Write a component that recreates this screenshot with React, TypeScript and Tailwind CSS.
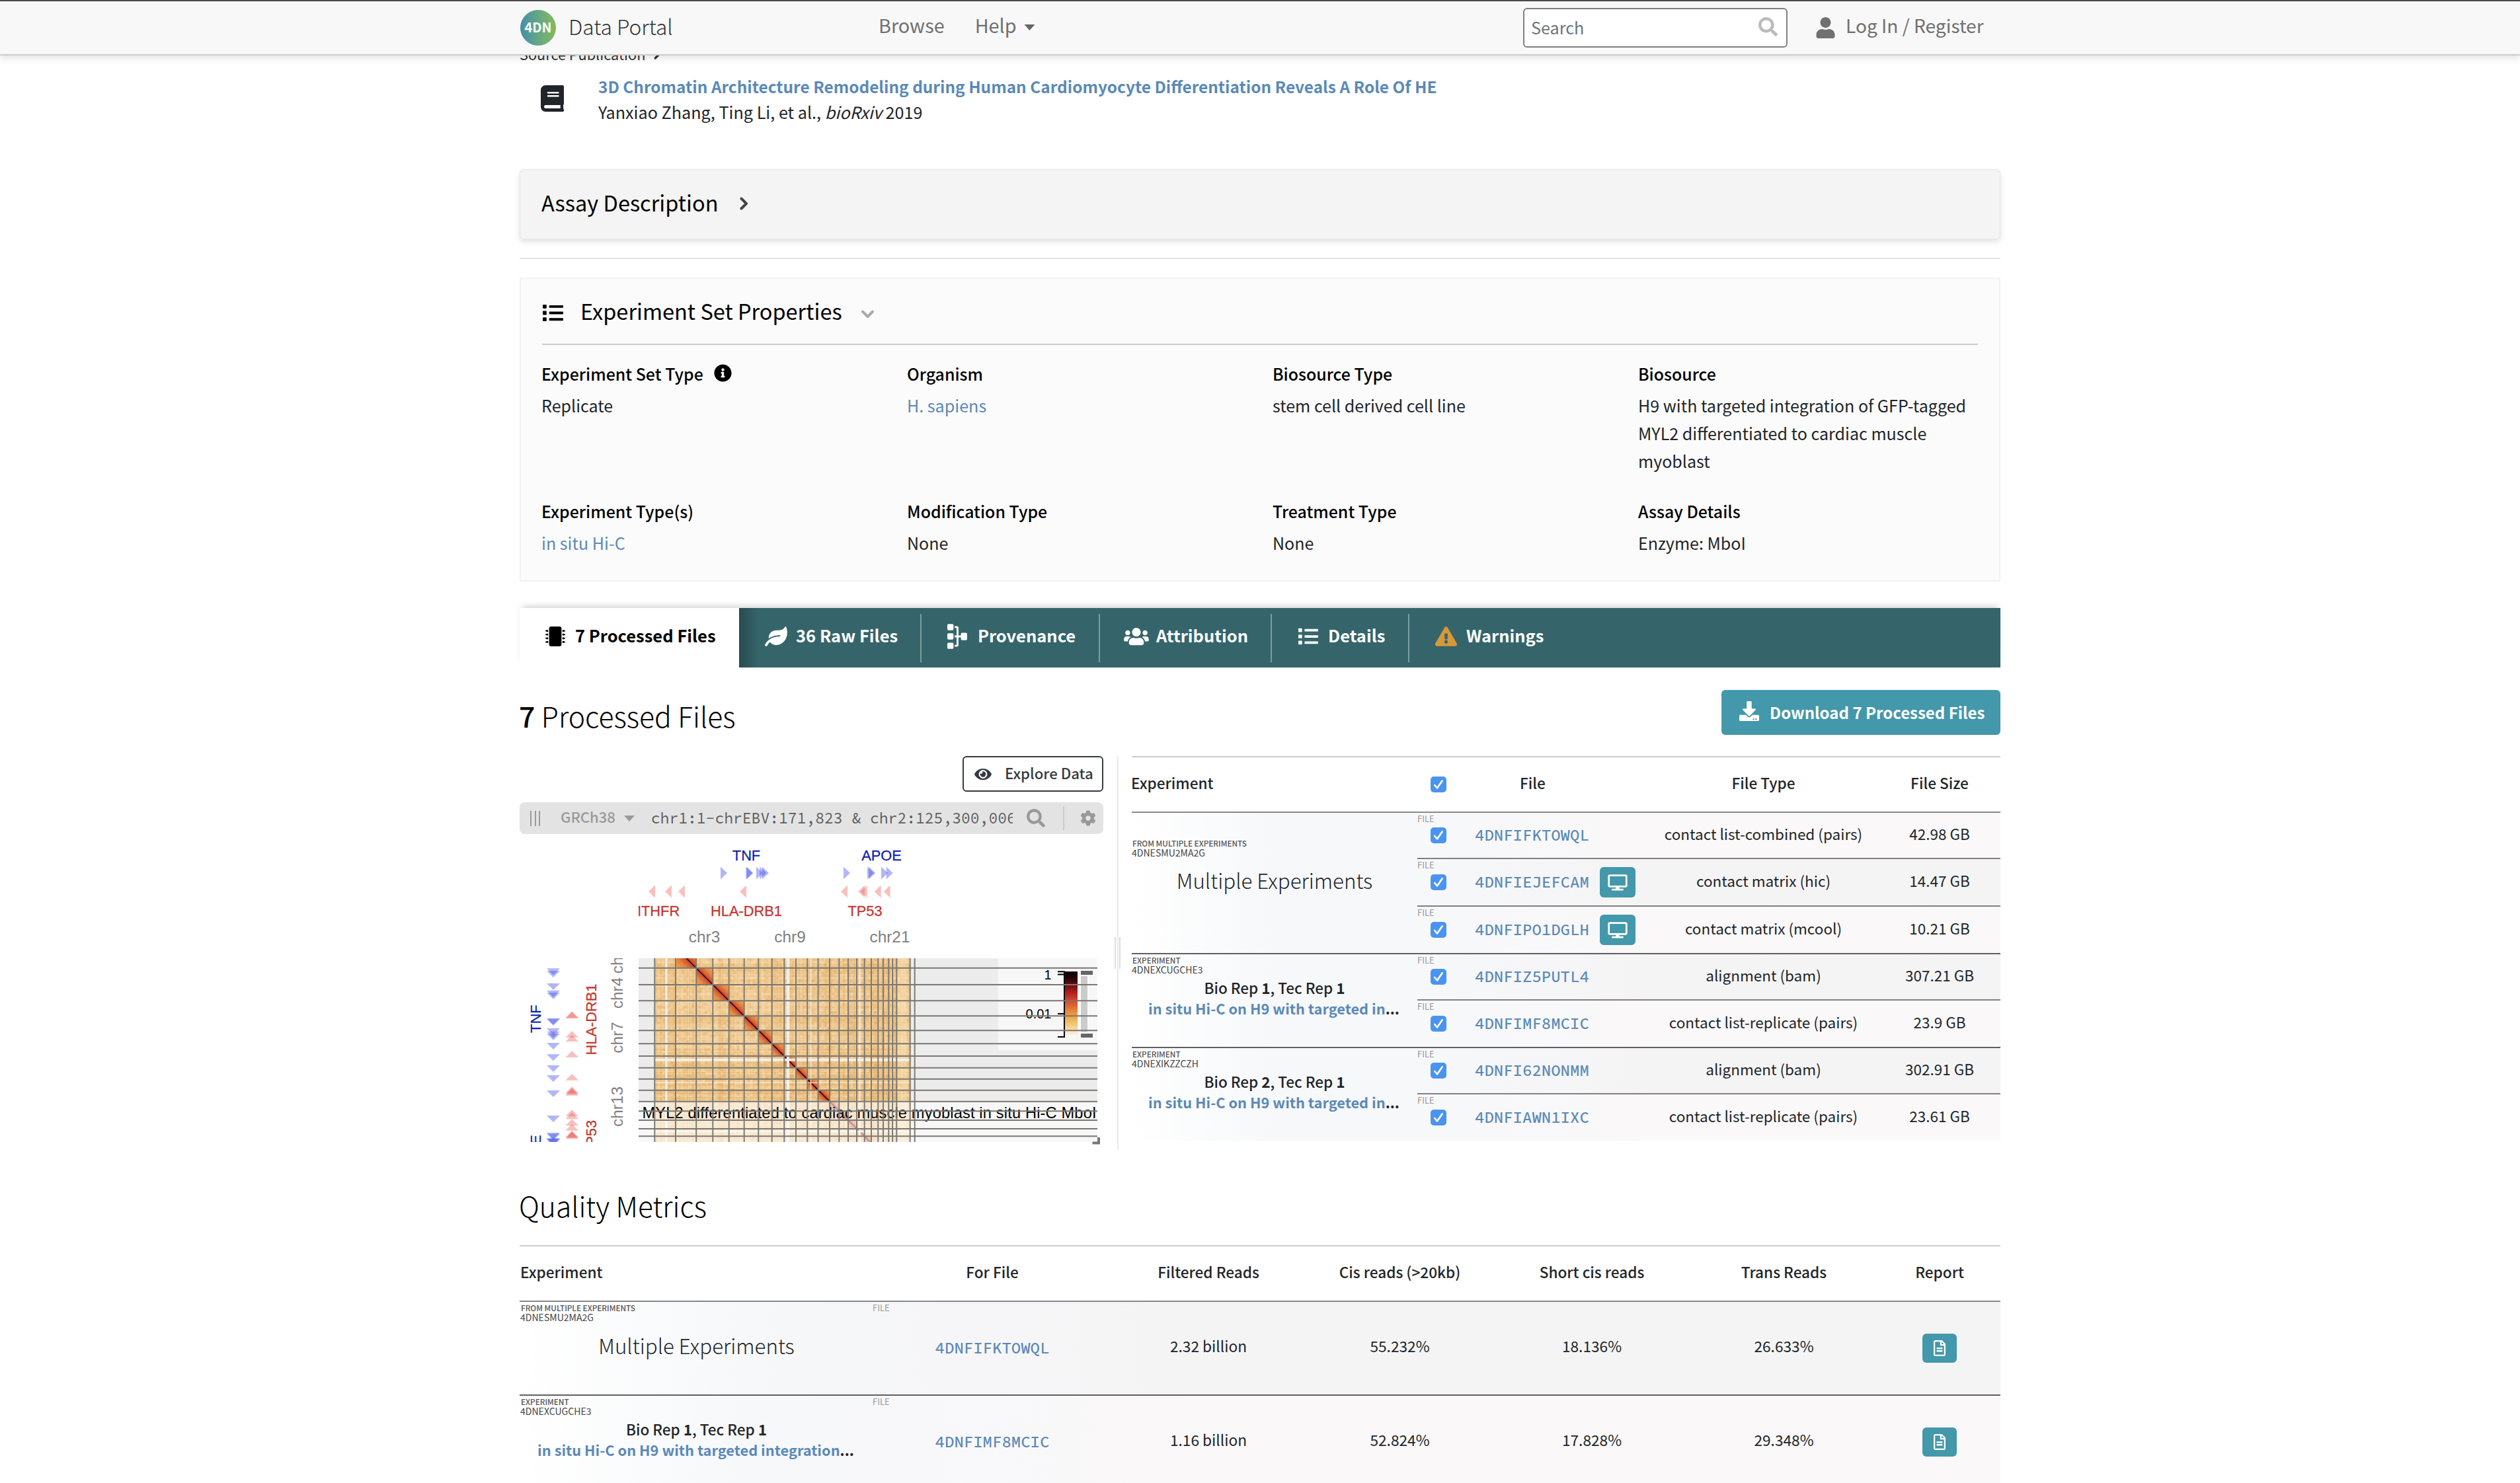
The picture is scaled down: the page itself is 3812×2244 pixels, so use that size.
import type { ReactNode } from "react";
import {
  FaBook,
  FaCog,
  FaDownload,
  FaExclamationTriangle,
  FaEye,
  FaInfoCircle,
  FaLeaf,
  FaList,
  FaMicrochip,
  FaRegFileAlt,
  FaSearch,
  FaSitemap,
  FaUser,
  FaUsers,
} from "react-icons/fa";

/* ---------- small shared pieces ---------- */

function Caret({ className }: { className: string }) {
  return (
    <svg viewBox="0 0 16 9" className={className} fill="currentColor">
      <path d="M0 0H16L8 9Z" />
    </svg>
  );
}

function Angle({ className }: { className: string }) {
  return (
    <svg viewBox="0 0 15 20" className={className} fill="none" stroke="currentColor" strokeWidth="4" strokeLinecap="round" strokeLinejoin="round">
      <path d="M4 2.5L11.5 10L4 17.5" />
    </svg>
  );
}

function Checkbox() {
  return (
    <span className="flex size-6 shrink-0 items-center justify-center rounded-[5px] bg-[#4a94f0]">
      <svg viewBox="0 0 24 24" className="size-6" fill="none" stroke="#fff" strokeWidth="2.6" strokeLinecap="round" strokeLinejoin="round">
        <path d="M6.2 13L10 17.4L17.6 6.4" />
      </svg>
    </span>
  );
}

function Monitor() {
  return (
    <svg viewBox="0 0 30 25" className="h-[25px] w-[30px]" fill="none" stroke="#fff" strokeWidth="2.8" strokeLinejoin="round" strokeLinecap="round">
      <rect x="1.7" y="1.7" width="26.6" height="16.6" rx="1.6" />
      <path d="M15 18.5V22" strokeWidth="5" strokeLinecap="butt" />
      <path d="M7.5 23.2H22.5" />
    </svg>
  );
}

/* ---------- header ---------- */

function Header() {
  return (
    <header className="relative z-10 h-[84px] border-t-2 border-b-2 border-t-[#4a4a4a] border-b-[#cccccc] bg-[#f8f8f8] shadow-[0_3px_12px_rgba(0,0,0,0.13)]">
      <div className="mx-auto flex h-full w-[2240px] items-center text-[28.8px] leading-10 font-normal text-[#707070]">
        <div className="flex w-[543px] items-center pl-px">
          <span className="flex size-[54px] items-center justify-center rounded-full bg-linear-to-r from-[#4390a8] to-[#86bb53] pb-0.5 text-[20px] font-bold text-white">
            4DN
          </span>
          <span className="pb-[7px] pl-[19px] text-[31.7px] font-light text-[#333]">Data Portal</span>
        </div>
        <span className="pb-2">Browse</span>
        <span className="pb-2 pl-[46px]">Help</span>
        <Caret className="mb-0.5 ml-[11px] h-[9px] w-[17px] text-[#666]" />
        <div className="ml-auto flex h-[60px] w-[400px] items-center justify-between rounded-md border-2 border-[#808080] bg-white pr-[13px] pl-[10px]">
          <span className="pb-0.5 text-[25.2px] text-[#6c757d]">Search</span>
          <FaSearch className="mb-1 size-[29px] text-[#bbb]" />
        </div>
        <FaUser className="ml-[43px] h-8 w-[29px]" />
        <span className="w-[250px] pb-2 pl-4 text-[28.1px] whitespace-nowrap">Log In / Register</span>
      </div>
    </header>
  );
}

/* ---------- publication, assay, properties ---------- */

function Publication() {
  return (
    <section>
      <div className="-mt-[17px] flex h-[30px] items-center text-[21.7px] leading-[30px] font-normal text-[#333]">
        Source Publication
        <Angle className="ml-3 h-4 w-3" />
      </div>
      <div className="mt-[15px] flex h-[76px] pl-8">
        <FaBook className="mt-[17px] h-10 w-[35px] text-[#212529]" />
        <div className="pl-[52px] text-[25.2px] leading-[38px] font-normal text-[#212529]">
          <div className="text-[24.4px] font-bold text-[#5a89b8]">
            3D Chromatin Architecture Remodeling during Human Cardiomyocyte Differentiation Reveals A Role Of HE
          </div>
          <div>
            Yanxiao Zhang, Ting Li, et al., <i>bioRxiv</i> 2019
          </div>
        </div>
      </div>
    </section>
  );
}

const PROPERTIES: { label: string; value: string; link?: boolean; info?: boolean }[] = [
  { label: "Experiment Set Type", value: "Replicate", info: true },
  { label: "Organism", value: "H. sapiens", link: true },
  { label: "Biosource Type", value: "stem cell derived cell line" },
  { label: "Biosource", value: "H9 with targeted integration of GFP-tagged MYL2 differentiated to cardiac muscle myoblast" },
  { label: "Experiment Type(s)", value: "in situ Hi-C", link: true },
  { label: "Modification Type", value: "None" },
  { label: "Treatment Type", value: "None" },
  { label: "Assay Details", value: "Enzyme: MboI" },
];

function Properties() {
  return (
    <section className="mt-7 h-[460px] border-2 border-[#f3f3f3] bg-[#fbfbfb] px-8 pt-7">
      <div className="flex h-[72px] items-start border-b-2 border-[#cccccc] text-[32.5px] leading-10 font-normal text-black">
        <FaList className="mt-2 ml-px size-[31px]" />
        <span className="pl-[26px]">Experiment Set Properties</span>
        <Angle className="mt-[15px] ml-[31px] h-[20px] w-[15px] rotate-90 text-[#aaa]" />
      </div>
      <div className="-ml-px grid grid-cols-[553px_553px_553px_514px] gap-y-[37px] pt-[25px]">
        {PROPERTIES.map((p) => (
          <div key={p.label}>
            <div className="flex h-[45px] items-start text-[24.9px] leading-9 font-medium text-black">
              {p.label}
              {p.info && <FaInfoCircle className="mt-1 ml-4 size-[27px]" />}
            </div>
            <div className={p.link ? "text-[25.1px] leading-[42px] font-normal text-[#5a89b8]" : "text-[25.05px] leading-[42px] font-normal text-[#212529]"}>
              {p.value}
            </div>
          </div>
        ))}
      </div>
    </section>
  );
}

/* ---------- tabs ---------- */

function Tab({ box, icon, children }: { box: string; icon: ReactNode; children: ReactNode }) {
  return (
    <div className={box}>
      {icon}
      <span className="mb-[5px] whitespace-nowrap">{children}</span>
    </div>
  );
}

function Divider() {
  return <div className="-mx-px h-[73px] w-0.5 bg-[#7d9da1]" />;
}

function Tabs() {
  return (
    <nav className="mt-10 flex h-[90px] items-center bg-[#35656b] text-[25.5px] leading-9 font-bold text-white shadow-[0_-6px_10px_-4px_rgba(0,0,0,0.2)]">
      <Tab box="flex h-full w-[332px] items-center gap-[15px] bg-white pb-1 pl-[39px] text-black" icon={<FaMicrochip className="size-[30px]" />}>
        7 Processed Files
      </Tab>
      <div className="flex h-full items-center bg-linear-to-r from-black/25 to-transparent to-[30px]">
        <Tab box="flex w-[275px] items-center gap-[13px] pb-1 pl-[39px]" icon={<FaLeaf className="h-[30px] w-[34px]" />}>
          36 Raw Files
        </Tab>
      </div>
      <Divider />
      <Tab box="flex w-[270px] items-center gap-[12px] pb-1 pl-9" icon={<FaSitemap className="h-[30px] w-[38px] rotate-90" />}>
        Provenance
      </Tab>
      <Divider />
      <Tab box="flex w-[260px] items-center gap-[11px] pb-1 pl-[37px]" icon={<FaUsers className="h-[30px] w-[38px]" />}>
        Attribution
      </Tab>
      <Divider />
      <Tab box="flex w-[208px] items-center gap-[15px] pb-1 pl-[41px]" icon={<FaList className="size-[30px]" />}>
        Details
      </Tab>
      <Divider />
      <Tab box="flex items-center gap-[14px] pb-1 pl-[40px]" icon={<FaExclamationTriangle className="h-[30px] w-[33px] text-[#d8983a]" />}>
        Warnings
      </Tab>
    </nav>
  );
}

/* ---------- contact matrix viewer ---------- */

/* Left edges of the chromosomes in the matrix; a row's top is its column's left plus SHIFT. */
const V_LINES = [990.3, 1022, 1053.2, 1078.3, 1102.7, 1125.7, 1147.3, 1167.7, 1186.3, 1204, 1221.3, 1237.6, 1255, 1269.3, 1283, 1296, 1307.7, 1318, 1328.3, 1336, 1344.3, 1350, 1356.3, 1376.7, 1383.7];
const H_LINES = [1464.7, 1490, 1514.3, 1537.3, 1559.3, 1579.3, 1598, 1615.7, 1632.7, 1649.7, 1666.7, 1681.3, 1695, 1708, 1719.3];
const SHIFT = 411.7;
const GAPS: [number, number][] = [[1006.3, 3], [1190, 4], [1226, 1.2], [1299.5, 2.2], [1348, 0.8]];

const hash = (n: number) => {
  const s = Math.sin(n * 127.1 + 11.7) * 43758.5453;
  return s - Math.floor(s);
};

const STRIPS_X = Array.from({ length: 193 }, (_, i) => ({ x: 990.5 + i * 2, a: hash(i) }));
const STRIPS_Y = Array.from({ length: 139 }, (_, i) => ({ y: 1450 + i * 2, a: hash(i + 500) }));

function cellPath(low: number, high: number) {
  let d = "";
  for (let i = 0; i < 97; i++)
    for (let j = 0; j < 70; j++) {
      const v = hash(i * 71 + j * 3.7);
      if (v >= low && v < high) d += `M${990.3 + i * 4} ${1450 + j * 4}h4v4h-4z`;
    }
  return d;
}
const CELLS_LIGHT = cellPath(0, 0.25);
const CELLS_DARK = cellPath(0.8, 1);

const right = (x: number, y: number) => `M${x} ${y}l10 9.5l-10 9.5z`;
const left = (x: number, y: number) => `M${x} ${y}l10 -9.5v19z`;
const down = (x: number, y: number) => `M${x} ${y}h20l-10 10z`;
const up = (x: number, y: number) => `M${x} ${y}h19.5l-9.75 -10z`;

function Viewer() {
  return (
    <svg viewBox="786 1262 883 478" className="h-[478px] w-[883px]" fontFamily="Liberation Sans, Arial, sans-serif">
      <defs>
        <clipPath id="plot"><rect x="966" y="1450" width="694" height="278" /></clipPath>
        <clipPath id="top"><rect x="966" y="1262" width="694" height="180" /></clipPath>
        <clipPath id="side"><rect x="786" y="1450" width="157" height="278" /></clipPath>
        <linearGradient id="heat" x1="0" y1="1" x2="1" y2="0">
          <stop offset="0" stopColor="#f0a650" />
          <stop offset="0.25" stopColor="#e88440" />
          <stop offset="0.5" stopColor="#c84428" />
          <stop offset="0.75" stopColor="#e88440" />
          <stop offset="1" stopColor="#f0a650" />
        </linearGradient>
        <linearGradient id="scale" x1="0" y1="0" x2="0" y2="1">
          <stop offset="0" stopColor="#000" />
          <stop offset="0.12" stopColor="#300508" />
          <stop offset="0.33" stopColor="#b5201f" />
          <stop offset="0.5" stopColor="#dc5a30" />
          <stop offset="0.68" stopColor="#eca23f" />
          <stop offset="0.82" stopColor="#f3c878" />
          <stop offset="1" stopColor="#fdf8ee" />
        </linearGradient>
      </defs>

      {/* gene and chromosome labels above the matrix */}
      <g clipPath="url(#top)" textAnchor="middle">
        <g fontSize="21.8" fill="#101fae" stroke="#101fae" strokeWidth="0.3">
          <text x="1129" y="1301.7">TNF</text>
          <text x="1333.5" y="1301.7">APOE</text>
        </g>
        <g fontSize="21.8" fill="#c5362f" stroke="#c5362f" strokeWidth="0.3">
          <text x="990" y="1386">MTHFR</text>
          <text x="1129" y="1386">HLA-DRB1</text>
          <text x="1308.5" y="1386">TP53</text>
        </g>
        <g fontSize="24.4" fill="#808080">
          <text x="1065.5" y="1425.7">chr3</text>
          <text x="1195" y="1425.7">chr9</text>
          <text x="1346" y="1425.7">chr21</text>
        </g>
        <g fill="#3d4ae8" fillOpacity="0.4">
          {[1090, 1128.3, 1129.5, 1144, 1149.3, 1153, 1276, 1312, 1314.3, 1333, 1340.7].map((x) => (
            <path key={x} d={right(x, 1311.5)} />
          ))}
        </g>
        <g fill="#e8504a" fillOpacity="0.36">
          {[981, 1006, 1026, 1119, 1272, 1298, 1301.7, 1322.7, 1336.7].map((x) => (
            <path key={x} d={left(x, 1349)} />
          ))}
        </g>
      </g>

      {/* the same annotations down the left side */}
      <g clipPath="url(#side)" textAnchor="middle">
        <g fontSize="21.8" fill="#101fae" stroke="#101fae" strokeWidth="0.3">
          <text transform="translate(818 1541.5) rotate(-90)">TNF</text>
          <text transform="translate(818 1747.5) rotate(-90)">APOE</text>
        </g>
        <g fontSize="21.8" fill="#c5362f" stroke="#c5362f" strokeWidth="0.3">
          <text transform="translate(902 1542.5) rotate(-90)">HLA-DRB1</text>
          <text transform="translate(902 1721) rotate(-90)">TP53</text>
        </g>
        <g fontSize="24.4" fill="#808080">
          <text transform="translate(942 1449.5) rotate(-90)">chr3</text>
          <text transform="translate(942 1502.5) rotate(-90)">chr4</text>
          <text transform="translate(942 1570) rotate(-90)">chr7</text>
          <text transform="translate(942 1674.5) rotate(-90)">chr13</text>
        </g>
        <g fill="#3d4ae8" fillOpacity="0.4">
          {[1465.3, 1469, 1488, 1498.7, 1502, 1540.7, 1541.7, 1556, 1560.7, 1564, 1578, 1595.3, 1612, 1627, 1650, 1688, 1714, 1715.5, 1722, 1723, 1724].map((y) => (
            <path key={y} d={down(827, y)} />
          ))}
        </g>
        <g fill="#e8504a" fillOpacity="0.36">
          {[1540.2, 1540.9, 1570, 1576, 1600, 1634.7, 1654, 1656, 1657.8, 1689, 1693.3, 1703.3, 1710.7, 1720.7, 1722, 1723.3].map((y) => (
            <path key={y} d={up(855.5, y)} />
          ))}
        </g>
      </g>

      {/* matrix */}
      <g clipPath="url(#plot)">
        <rect x="966" y="1450" width="694" height="278" fill="#ececec" />
        <rect x="990.3" y="1450" width="386.4" height="278" fill="#f3d09a" />
        <rect x="1237" y="1450" width="124" height="278" fill="#e0aa60" fillOpacity="0.2" />
        <rect x="990.3" y="1608" width="386.4" height="58" fill="#e6b266" fillOpacity="0.25" />
        <path d={CELLS_LIGHT} fill="#f8e1b8" fillOpacity="0.45" />
        <path d={CELLS_DARK} fill="#dea354" fillOpacity="0.26" />
        {STRIPS_X.map((s) => (
          <rect key={s.x} x={s.x} y="1450" width="2" height="278" fill={s.a > 0.4 ? "#dca052" : "#faead0"} fillOpacity={Math.abs(s.a - 0.4) * 0.5} />
        ))}
        {STRIPS_Y.map((s) => (
          <rect key={s.y} x="990.3" y={s.y} width="386.4" height="2" fill={s.a > 0.4 ? "#dca052" : "#faead0"} fillOpacity={Math.abs(s.a - 0.4) * 0.4} />
        ))}
        <rect x="1358" y="1450" width="14" height="278" fill="#fae4bd" fillOpacity="0.45" />
        {V_LINES.slice(1, 22).map((x, i) => (
          <rect key={x} x={x} y={x + SHIFT} width={V_LINES[i + 2] - x} height={V_LINES[i + 2] - x} fill="url(#heat)" />
        ))}
        <path d="M1022 1433.7L1361 1772.7" stroke="#2a0808" strokeWidth="1.7" />
        {GAPS.map(([x, w]) => (
          <g key={x} fill="#f3efe8">
            <rect x={x} y="1450" width={w} height="278" />
            <rect x="990.3" y={x + SHIFT} width="386.4" height={w} />
          </g>
        ))}
        <rect x="966" y="1665.5" width="694" height="62.5" fill="#fff" fillOpacity="0.58" />
        <rect x="1509.7" y="1450" width="150.3" height="139" fill="#fff" fillOpacity="0.6" />

        {/* colour scale */}
        <rect x="1611" y="1470" width="19" height="98" fill="url(#scale)" />
        <rect x="1633.5" y="1476" width="13" height="87" fill="#fff" />
        <rect x="1635" y="1477" width="10" height="84.5" fill="#cbcbcb" />
        <rect x="1635" y="1469" width="18" height="6" fill="#666" />
        <rect x="1635" y="1564" width="18" height="6" fill="#666" />
        <path d="M1600 1470.3H1611M1600 1474.5H1610M1600 1534H1610M1610 1470V1570M1600 1569H1611" stroke="#000" strokeWidth="1.9" fill="none" />
        <g fontSize="20" textAnchor="end">
          <text x="1590.5" y="1481.5">1</text>
          <text x="1590.5" y="1540.7">0.01</text>
        </g>

        <text x="971.5" y="1691.7" fontSize="23.6" textLength="687" lengthAdjust="spacing">
          MYL2 differentiated to cardiac muscle myoblast in situ Hi-C MboI
        </text>

        <path
          d={V_LINES.map((x) => `M${x} 1450V1728`).join("") + H_LINES.map((y) => `M966 ${y}H1660`).join("")}
          stroke="#7a7772"
          strokeWidth="1.9"
        />
      </g>
      <path d="M1652.5 1729.5H1662V1721" stroke="#777" strokeWidth="4" fill="none" />
    </svg>
  );
}

function ViewerPanel() {
  return (
    <div className="w-[883px]">
      <div className="flex justify-end">
        <div className="flex h-[54px] w-[213px] items-center rounded-md border-2 border-[#343a40] pl-4 text-[22.2px] leading-8 font-medium text-[#343a40]">
          <FaEye className="h-[23px] w-[26px]" />
          <span className="pb-[5px] pl-5">Explore Data</span>
        </div>
      </div>
      <div className="mt-4 flex h-12 items-center rounded-lg bg-[#e3e3e3] pl-4 text-[#999]">
        <div className="flex h-[23px] gap-[4.5px]">
          <div className="w-0.5 bg-[#999]" />
          <div className="w-0.5 bg-[#999]" />
          <div className="w-0.5 bg-[#999]" />
        </div>
        <span className="pb-[7px] pl-[31px] text-[22px] leading-8 font-medium">GRCh38</span>
        <Caret className="ml-[13px] h-[9px] w-4" />
        <div className="ml-[25px] w-[547px] overflow-hidden font-['Source_Code_Pro','Roboto_Mono',monospace] text-[23px] leading-8 whitespace-nowrap text-[#5c5c5c]">
          chr1:1-chrEBV:171,823 &amp; chr2:125,300,006
        </div>
        <FaSearch className="ml-[21px] size-7" />
        <div className="ml-[27px] h-9 w-0.5 bg-[#cccccc]" />
        <FaCog className="ml-6 size-6" />
      </div>
      <Viewer />
    </div>
  );
}

/* ---------- tables ---------- */

const MONO = "font-['Source_Code_Pro','Roboto_Mono',monospace] text-[24px] font-medium text-[#5a89b8]";

type ExperimentInfo = { kind: string; accession: string; rep?: string; title?: string };

const MULTI: ExperimentInfo = { kind: "FROM MULTIPLE EXPERIMENTS", accession: "4DNESMU2MA2G" };

function ExperimentCell({ info, box, gap }: { info: ExperimentInfo; box: string; gap: string }) {
  return (
    <div className={box}>
      <div className="pl-px text-[11.75px] leading-[13px] font-medium text-[#555]">{info.kind}</div>
      <div className="text-[14.05px] leading-4 font-normal text-[#444]">{info.accession}</div>
      {info.rep ? (
        <div className="mt-[3px] text-center text-[22.5px] leading-8 font-medium whitespace-nowrap text-[#212529]">
          <div>
            Bio Rep <b className="font-bold">{info.rep}</b>, Tec Rep <b className="font-bold">1</b>
          </div>
          <div className="pr-0.5 text-[21.8px] font-bold">
            <span className="text-[#5a89b8]">{info.title}</span>...
          </div>
        </div>
      ) : (
        <div className={gap}>Multiple Experiments</div>
      )}
    </div>
  );
}

type FileRow = { id: string; type: string; size: string; view?: boolean; row: string };

const GROUPS: { info: ExperimentInfo; cell: string; files: FileRow[] }[] = [
  {
    info: MULTI,
    cell: "w-[432px] shrink-0 bg-linear-to-r from-white to-[#f7f8fa] to-50% pt-[39px]",
    files: [
      { id: "4DNFIFKTOWQL", type: "contact list-combined (pairs)", size: "42.98 GB", row: "flex h-[68px] items-center bg-linear-to-r from-[#f7f8fa] to-[#faf8f9] to-40%" },
      { id: "4DNFIEJEFCAM", type: "contact matrix (hic)", size: "14.47 GB", view: true, row: "flex h-[72px] items-center border-t-2 border-[#808080] bg-linear-to-r from-[#f7f8fa] to-[#f5f4f5] to-40%" },
      { id: "4DNFIPO1DGLH", type: "contact matrix (mcool)", size: "10.21 GB", view: true, row: "flex h-[72px] items-center border-t-2 border-[#808080] bg-linear-to-r from-[#f7f8fa] to-[#faf8f9] to-40%" },
    ],
  },
  {
    info: { kind: "EXPERIMENT", accession: "4DNEXCUGCHE3", rep: "1", title: "in situ Hi-C on H9 with targeted in" },
    cell: "w-[432px] shrink-0 border-t-2 border-[#606060] bg-linear-to-r from-white to-[#f7f8fa] to-50% pt-[2px]",
    files: [
      { id: "4DNFIZ5PUTL4", type: "alignment (bam)", size: "307.21 GB", row: "flex h-[70px] items-center border-t-2 border-[#606060] bg-linear-to-r from-[#f7f8fa] to-[#f5f4f5] to-40%" },
      { id: "4DNFIMF8MCIC", type: "contact list-replicate (pairs)", size: "23.9 GB", row: "flex h-[72px] items-center border-t-2 border-[#808080] bg-linear-to-r from-[#f7f8fa] to-[#faf8f9] to-40%" },
    ],
  },
  {
    info: { kind: "EXPERIMENT", accession: "4DNEXIKZZCZH", rep: "2", title: "in situ Hi-C on H9 with targeted in" },
    cell: "w-[432px] shrink-0 border-t-2 border-[#606060] bg-linear-to-r from-white to-[#f7f8fa] to-50% pt-[2px]",
    files: [
      { id: "4DNFI62NONMM", type: "alignment (bam)", size: "302.91 GB", row: "flex h-[70px] items-center border-t-2 border-[#606060] bg-linear-to-r from-[#f7f8fa] to-[#f5f4f5] to-40%" },
      { id: "4DNFIAWN1IXC", type: "contact list-replicate (pairs)", size: "23.61 GB", row: "flex h-[72px] items-center border-t-2 border-[#808080] bg-linear-to-r from-[#f7f8fa] to-[#faf8f9] to-40%" },
    ],
  },
];

function FilesTable() {
  return (
    <div className="w-[1314px] text-[22.5px] leading-8 font-normal text-[#212529]">
      <div className="flex h-[86px] items-center border-t-2 border-b-2 border-t-[#cccccc] border-b-[#888888] text-[22.6px] font-medium">
        <div className="-ml-px w-[433px] pb-[5px]">Experiment</div>
        <div className="flex w-[349px] items-center pl-5">
          <Checkbox />
          <span className="w-[261px] pb-[5px] text-center">File</span>
        </div>
        <div className="w-[349px] pb-[5px] text-center">File Type</div>
        <div className="w-[184px] pb-[5px] text-center">File Size</div>
      </div>
      {GROUPS.map((g) => (
        <div key={g.info.accession} className="flex">
          <ExperimentCell info={g.info} box={g.cell} gap="mt-[14px] text-center text-[31.3px] leading-10 font-light" />
          <div className="grow">
            {g.files.map((f) => (
              <div key={f.id} className={f.row}>
                <div className="flex h-full w-[349px] flex-col">
                  <span className="-mb-4 h-4 text-[13px] leading-[18px] font-normal text-[#999]">FILE</span>
                  <div className="flex h-full items-center pl-5">
                    <Checkbox />
                    <span className={`${MONO} w-[188px] shrink-0 pl-[43px]`}>{f.id}</span>
                    {f.view && (
                      <span className="ml-11 flex h-[46px] w-[54px] items-center justify-center rounded-md bg-[#4398ab]">
                        <Monitor />
                      </span>
                    )}
                  </div>
                </div>
                <div className="w-[349px] pb-[7px] text-center">{f.type}</div>
                <div className="w-[184px] pb-[7px] text-center">{f.size}</div>
              </div>
            ))}
          </div>
        </div>
      ))}
    </div>
  );
}

const METRIC_GRID = "grid grid-cols-[534px_362px_292px_287px_294px_287px_184px]";

const METRICS: { info: ExperimentInfo; id: string; values: string[]; row: string }[] = [
  {
    info: MULTI,
    id: "4DNFIFKTOWQL",
    values: ["2.32 billion", "55.232%", "18.136%", "26.633%"],
    row: "h-[140px] bg-linear-to-r from-white via-[#f7f8fa] via-15% to-[#f5f4f5] to-45%",
  },
  {
    info: { kind: "EXPERIMENT", accession: "4DNEXCUGCHE3", rep: "1", title: "in situ Hi-C on H9 with targeted integration" },
    id: "4DNFIMF8MCIC",
    values: ["1.16 billion", "52.824%", "17.828%", "29.348%"],
    row: "h-[142px] border-t-2 border-[#606060] bg-linear-to-r from-white via-[#f7f8fa] via-15% to-[#faf8f9] to-45%",
  },
];

function MetricsTable() {
  return (
    <div className="mt-9 text-center text-[22.7px] leading-8 font-normal text-[#212529]">
      <div className={`${METRIC_GRID} h-[86px] items-center border-t-2 border-b-2 border-t-[#cccccc] border-b-[#888888] pb-[5px] text-[22.6px] font-medium`}>
        <div className="pl-px text-left">Experiment</div>
        <div>For File</div>
        <div>Filtered Reads</div>
        <div>Cis reads (&gt;20kb)</div>
        <div>Short cis reads</div>
        <div>Trans Reads</div>
        <div>Report</div>
      </div>
      {METRICS.map((m) => (
        <div key={m.id} className={`${METRIC_GRID} ${m.row}`}>
          <ExperimentCell info={m.info} box="pt-[2px] pl-px text-left" gap="mt-[15px] text-center text-[31.3px] leading-10 font-light" />
          <div className="flex flex-col">
            <span className="-mb-4 h-4 text-left text-[13px] leading-[18px] font-normal text-[#999]">FILE</span>
            <span className={`${MONO} my-auto`}>{m.id}</span>
          </div>
          {m.values.map((v) => (
            <div key={v} className="my-auto pb-[7px]">
              {v}
            </div>
          ))}
          <div className="m-auto flex h-11 w-[52px] items-center justify-center rounded-md bg-[#4398ab] text-white">
            <FaRegFileAlt className="h-6 w-[18px]" />
          </div>
        </div>
      ))}
    </div>
  );
}

/* ---------- page ---------- */

export default function App() {
  return (
    <div className="h-[2244px] w-[3812px] overflow-hidden bg-white font-['Noto_Sans_CJK_JP',sans-serif]">
      <Header />
      <main className="mx-auto w-[2240px]">
        <Publication />
        <section className="mt-[68px] flex h-[106px] items-center rounded-md border border-[#e8e8e8] bg-[#f4f4f4] pb-[7px] pl-8 text-[32.5px] leading-10 font-normal text-black shadow-[0_4px_8px_rgba(0,0,0,0.12)]">
          Assay Description
          <Angle className="mt-[5px] ml-[31px] h-[20px] w-[16px] text-[#444]" />
        </section>
        <div className="mt-7 h-0.5 bg-[#e2e2e2]" />
        <Properties />
        <Tabs />
        <div className="mt-[34px] flex h-[68px] items-start justify-between">
          <h2 className="mt-[14px] -ml-px text-[42.7px] leading-[48px] font-light text-black">
            <span className="font-medium">7</span> Processed Files
          </h2>
          <div className="flex h-[68px] w-[422px] items-center rounded-md bg-[#4398ab] pl-[27px] text-[24px] leading-9 font-bold text-white">
            <FaDownload className="mb-1 size-[30px]" />
            <span className="pb-px pl-4">Download 7 Processed Files</span>
          </div>
        </div>
        <div className="mt-8 flex h-[596px] justify-between">
          <ViewerPanel />
          <div className="flex w-[9px] items-center justify-between">
            <div className="h-12 w-0.5 bg-[#dddddd]" />
            <div className="h-full w-0.5 bg-[#eaeaea]" />
            <div className="h-12 w-0.5 bg-[#dddddd]" />
          </div>
          <FilesTable />
        </div>
        <h2 className="mt-[60px] -ml-px text-[42.5px] leading-[48px] font-light text-black">Quality Metrics</h2>
        <MetricsTable />
      </main>
    </div>
  );
}
